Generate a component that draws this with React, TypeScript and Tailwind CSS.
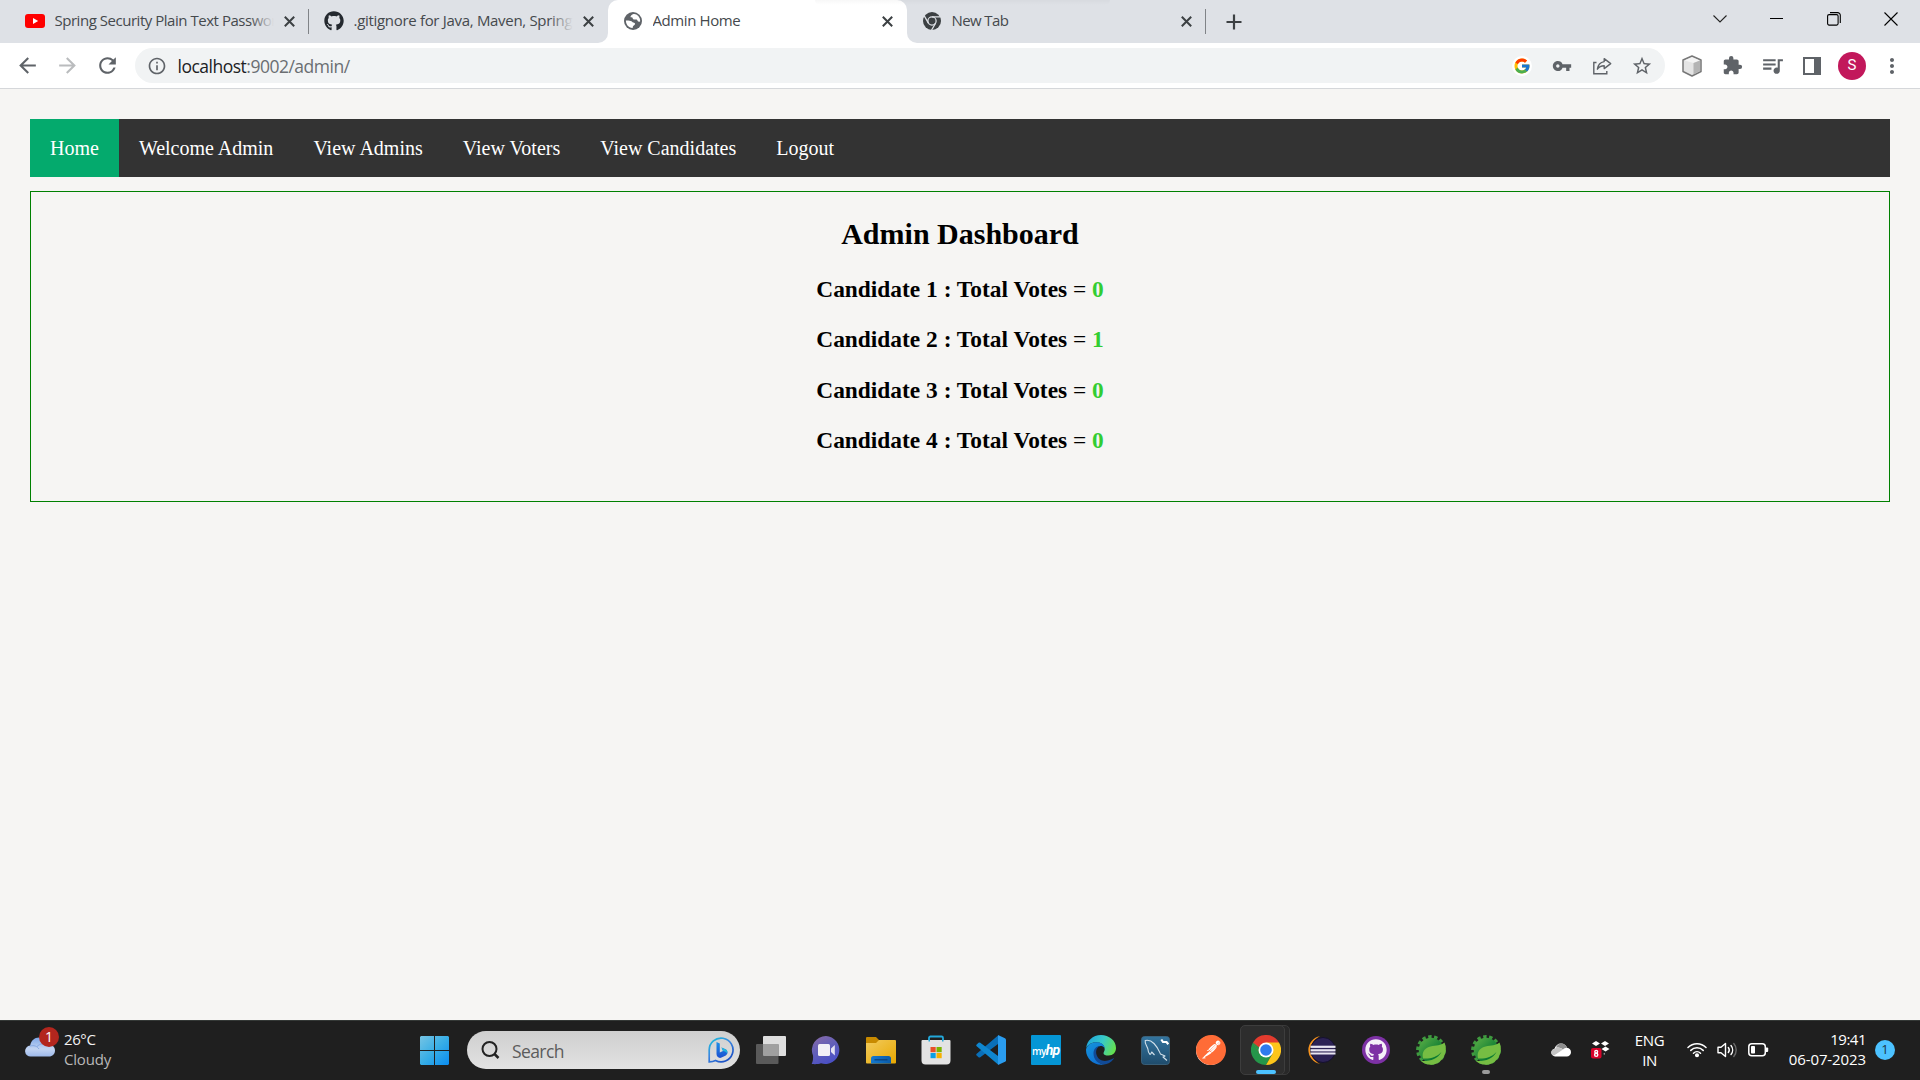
import React from 'react';
import {
  MdArrowBack,
  MdArrowForward,
  MdRefresh,
  MdInfoOutline,
  MdVpnKey,
  MdStarBorder,
  MdExtension,
  MdQueueMusic,
  MdMoreVert,
} from 'react-icons/md';
import { FcGoogle } from 'react-icons/fc';
import { FaGithub } from 'react-icons/fa';
import { SiPostman } from 'react-icons/si';

type Children = { children: React.ReactNode };

/* ---------- browser icons ---------- */

const CloseGlyph = () => (
  <svg width="11" height="11" viewBox="0 0 11 11" stroke="#3c4043" strokeWidth="2" fill="none">
    <path d="M0.8 0.8L10.2 10.2M10.2 0.8L0.8 10.2" />
  </svg>
);

const YoutubeIcon = () => (
  <svg width="20" height="20" viewBox="0 0 20 20">
    <rect x="0" y="3" width="20" height="14" rx="3" fill="#f00" />
    <path d="M8 7l5.2 3L8 13z" fill="#fff" />
  </svg>
);

const GlobeIcon = () => (
  <svg width="18" height="18" viewBox="0 0 18 18">
    <circle cx="9" cy="9" r="9" fill="#5f6368" />
    <path d="M9.500 2C11 1.600 13 2.600 14.300 4c1.200 1.500 1.900 3 1.900 5.200-.6.500-1.300.7-2 .4-.8-.4-.7-1.500-1.500-2-1-.5-2.300.2-3.300-.3-.9-.5-.5-1.600-1.200-1.900-.7-.2-1.400.3-1.700-.3C6.300 4 8 2.300 9.500 2z" fill="#fff" />
    <path d="M1.900 8.500c1.600 0 3.200 0 4.800.4 1.300.3 1.500 1.300 2.600 1.500 1 .2 1.800.5 1.700 1.500-.1 1.200-1.600 1.300-2 2.300-.3.700 0 1.400-.6 1.900C4.600 15.700 1.800 12.500 1.900 8.500z" fill="#fff" />
  </svg>
);

const ChromeMono = () => (
  <svg width="18" height="18" viewBox="0 0 24 24">
    <circle cx="12" cy="12" r="12" fill="#3c4043" />
    <g stroke="#dee1e6" strokeWidth="1.700" fill="none">
      <circle cx="12" cy="12" r="5.500" />
      <path d="M12 6.500H23M7.200 14.800L1.700 5.200M16.800 14.800L11.300 24.300" />
    </g>
  </svg>
);

const ShareIcon = () => (
  <svg width="20" height="20" viewBox="0 0 20 20" fill="none" stroke="#5f6368" strokeWidth="1.400">
    <path d="M4.500 6.500H1.800v11.200h13V15" />
    <path d="M12.200 2.600l6.500 5-6.500 5V9.800c-3 0-5.200 1-6.800 3.400.5-4 2.800-7 6.800-7.600z" strokeLinejoin="round" />
  </svg>
);

const CubeIcon = () => (
  <svg width="22" height="22" viewBox="0 0 22 22">
    <path d="M11 1l9 4v11.500l-9 4.500-9-4.500V5z" fill="#e4e4e4" stroke="#777" strokeWidth="1.500" strokeLinejoin="round" />
    <path d="M11 2.200l7.500 3.300L12.500 8 3.500 5.500z" fill="#f4f4f4" />
    <path d="M12.500 8l6.500-2.500V16l-6.500 3.500z" fill="#b4b4b4" />
  </svg>
);

const SidePanelIcon = () => (
  <svg width="18" height="18" viewBox="0 0 18 18">
    <rect x="1" y="1" width="16" height="16" fill="#fff" stroke="#5f6368" strokeWidth="2" />
    <rect x="11" y="1" width="6" height="16" fill="#5f6368" />
  </svg>
);

/* ---------- browser chrome ---------- */

type TabProps = { icon: React.ReactNode; title: string; tracking?: string; active?: boolean; divider?: boolean };

function Tab({ icon, title, tracking = 'tracking-[-0.4px]', active, divider }: TabProps) {
  return (
    <div className={`relative flex h-[43px] w-[299px] shrink-0 items-center pb-[1px] pl-[15px] ${active ? 'rounded-t-[10px] bg-white' : ''}`}>
      {active && (
        <>
          <span className="absolute bottom-0 left-[-10px] size-[10px] bg-white">
            <span className="block size-full rounded-br-[10px] bg-[#dee1e6]" />
          </span>
          <span className="absolute right-[-10px] bottom-0 size-[10px] bg-white">
            <span className="block size-full rounded-bl-[10px] bg-[#dee1e6]" />
          </span>
        </>
      )}
      <span className="flex w-5 shrink-0 items-center justify-center">{icon}</span>
      <span className={`relative -mt-[2px] ml-[9.500px] w-[219px] overflow-hidden text-[15px] leading-5 whitespace-nowrap text-[#45494d] ${tracking}`}>
        {title}
        {title.length > 20 && (
          <span className="absolute top-0 right-0 h-full w-6 bg-linear-to-r from-transparent to-[#dee1e6]" />
        )}
      </span>
      <span className="ml-[6px] flex w-5 shrink-0 justify-center">
        <CloseGlyph />
      </span>
      {divider && <span className="ml-auto h-[25px] w-px bg-[#808387]" />}
    </div>
  );
}

const WinControl = ({ children }: Children) => <span className="flex w-[57px] items-center justify-center">{children}</span>;

function TabStrip() {
  return (
    <div className="relative flex h-[43px] bg-[#dee1e6] pl-[10px]">
      <Tab icon={<YoutubeIcon />} title="Spring Security Plain Text Password" tracking="tracking-[-0.47px]" divider />
      <Tab icon={<FaGithub size={20} color="#24292f" />} title=".gitignore for Java, Maven, Spring B" tracking="tracking-[-0.31px]" />
      <Tab icon={<GlobeIcon />} title="Admin Home" active />
      <Tab icon={<ChromeMono />} title="New Tab" tracking="tracking-[-0.6px]" divider />
      <span className="flex w-[56px] items-center justify-center">
        <svg width="16" height="16" viewBox="0 0 16 16" stroke="#3c4043" strokeWidth="2.200">
          <path d="M8 0.500V15.500M0.500 8H15.500" />
        </svg>
      </span>
      <div className="mr-[1px] ml-auto flex h-[37px]">
        <WinControl>
          <svg width="14" height="8" viewBox="0 0 14 8" fill="none" stroke="#222" strokeWidth="1.100">
            <path d="M0.500 0.500L7 7L13.500 0.500" />
          </svg>
        </WinControl>
        <WinControl>
          <span className="h-px w-[13px] bg-black" />
        </WinControl>
        <WinControl>
          <svg width="14" height="14" viewBox="0 0 14 14" fill="none" stroke="#000" strokeWidth="1.100">
            <rect x="0.600" y="2.600" width="10.500" height="10.500" rx="1.500" />
            <path d="M3 0.600H10.500A2.700 2.700 0 0 1 13.300 3.300V11" />
          </svg>
        </WinControl>
        <WinControl>
          <svg width="14" height="14" viewBox="0 0 14 14" fill="none" stroke="#000" strokeWidth="1.100">
            <path d="M0.500 0.500L13.500 13.500M13.500 0.500L0.500 13.500" />
          </svg>
        </WinControl>
      </div>
      <span className="absolute top-0 left-[815px] h-[5px] w-[295px] rounded-b-full bg-linear-to-b from-black/3 to-transparent" />
    </div>
  );
}

const Cell = ({ children }: Children) => <span className="flex w-10 shrink-0 items-center justify-center">{children}</span>;

function Toolbar() {
  return (
    <div className="flex h-[46px] items-center border-b border-[#d5d7da] bg-white pl-[7px] text-[#5f6368]">
      <Cell>
        <MdArrowBack size={25} />
      </Cell>
      <Cell>
        <MdArrowForward size={25} color="#babcbe" />
      </Cell>
      <Cell>
        <MdRefresh size={25} />
      </Cell>
      <div className="ml-[8px] flex h-[35px] w-[1530px] shrink-0 items-center rounded-full bg-[#f1f3f4] pr-[3px] pl-[2px]">
        <Cell>
          <MdInfoOutline size={20} />
        </Cell>
        <span className="ml-[0.500px] text-[17.500px] leading-6 tracking-[-0.5px] text-[#6a6e72]">
          <span className="text-[#202124]">localhost</span>:9002/admin/
        </span>
        <div className="ml-auto flex">
          <Cell>
            <span className="flex size-5 items-center justify-center rounded-full bg-white">
              <FcGoogle size={18} />
            </span>
          </Cell>
          <Cell>
            <MdVpnKey size={20} />
          </Cell>
          <Cell>
            <ShareIcon />
          </Cell>
          <Cell>
            <MdStarBorder size={22} />
          </Cell>
        </div>
      </div>
      <div className="ml-[7px] flex">
        <Cell>
          <CubeIcon />
        </Cell>
        <Cell>
          <MdExtension size={21} />
        </Cell>
        <Cell>
          <MdQueueMusic size={25} className="shrink-0" />
        </Cell>
        <Cell>
          <SidePanelIcon />
        </Cell>
        <Cell>
          <span className="flex size-7 items-center justify-center rounded-full bg-[#c2185b] font-['Roboto',sans-serif] text-[15px] text-white">S</span>
        </Cell>
        <Cell>
          <MdMoreVert size={24} />
        </Cell>
      </div>
    </div>
  );
}

/* ---------- page ---------- */

const links = ['Home', 'Welcome Admin', 'View Admins', 'View Voters', 'View Candidates', 'Logout'];
const votes = [0, 1, 0, 0];

function Page() {
  return (
    <main className="flex-1 bg-[#f6f5f3] px-[30px] pt-[30px] font-['Liberation_Serif',serif] text-[20px]">
      <nav className="flex h-[58px] bg-[#333] text-white">
        {links.map((l, i) => (
          <a key={l} className={`flex items-center px-5 ${i === 0 ? 'bg-[#04aa6d]' : ''}`}>
            {l}
          </a>
        ))}
      </nav>
      <section className="mt-[14px] h-[311px] border border-[#008000] pt-[25px] text-center font-bold text-black">
        <h2 className="text-[30px] leading-[34px]">Admin Dashboard</h2>
        <div className="mt-[25px] flex flex-col gap-[23.400px]">
          {votes.map((v, i) => (
            <h3 key={i} className="text-[23.400px] leading-[27px]">
              Candidate {i + 1} : Total Votes <span className="font-normal">=</span> <span className="text-[#32cd32]">{v}</span>
            </h3>
          ))}
        </div>
      </section>
    </main>
  );
}

/* ---------- taskbar icons ---------- */

const WeatherIcon = () => (
  <svg width="30" height="20" viewBox="0 0 30 20">
    <defs>
      <linearGradient id="wc" x1="0" y1="0" x2="0" y2="1">
        <stop offset="0" stopColor="#7fa8e8" />
        <stop offset="0.600" stopColor="#c3d4f2" />
        <stop offset="1" stopColor="#9db9ea" />
      </linearGradient>
    </defs>
    <path d="M6 19.500a5.500 5.500 0 0 1-.8-11C6 3.500 9.500.5 14 .5c4.500 0 7.500 2.500 8.500 6.500 4 0 7.500 2.500 7.500 6.500 0 3.500-2.500 6-6 6z" fill="url(#wc)" />
    <path d="M5 9c4-1 7 0 9 3M12 9.500c3-3 7-3.500 10.500-2" stroke="#86a9e4" fill="none" />
  </svg>
);

const StartIcon = () => (
  <svg width="29" height="29" viewBox="0 0 29 29">
    <defs>
      <linearGradient id="st" gradientUnits="userSpaceOnUse" x1="0" y1="0" x2="29" y2="29">
        <stop offset="0" stopColor="#76c4e4" />
        <stop offset="0.500" stopColor="#38aee6" />
        <stop offset="1" stopColor="#0a8cf0" />
      </linearGradient>
    </defs>
    <path d="M1 0h13v14H0V1zM15 0h13l1 1v13H15zM0 15h14v14H1l-1-1zM15 15h14v13l-1 1H15z" fill="url(#st)" />
  </svg>
);

const BingIcon = () => (
  <svg width="26" height="26" viewBox="0 0 26 26">
    <defs>
      <linearGradient id="bo" x1="0" y1="0" x2="0.700" y2="1">
        <stop offset="0" stopColor="#17c3dc" />
        <stop offset="0.500" stopColor="#3a86e0" />
        <stop offset="1" stopColor="#1a4fc4" />
      </linearGradient>
      <linearGradient id="bb" x1="0" y1="0" x2="0" y2="1">
        <stop offset="0" stopColor="#1e90e8" />
        <stop offset="1" stopColor="#1c50d0" />
      </linearGradient>
    </defs>
    <path d="M1.200 24.800V13a11.900 11.900 0 1 1 6.300 10.500c-2 1-4 1.300-6.300 1.300z" fill="none" stroke="url(#bo)" strokeWidth="1.700" />
    <path d="M8.500 5l3.300 1.500v9L15 14l-1.500-3.500 4 1.700c2.600 1.300 2.600 4.800.3 6.200l-4.300 2.200c-2.400 1-5-.6-5-3.600z" fill="url(#bb)" />
    <path d="M13.500 10.500l4 1.700c1.700.9 2.200 2.700 1.600 4.200-.8-1.500-2.300-2-4.100-2.400z" fill="#23b4dc" />
  </svg>
);

const TaskViewIcon = () => (
  <svg width="30" height="30" viewBox="0 0 30 30">
    <rect x="7" y="1" width="23" height="20" rx="1" fill="#dedede" />
    <rect x="0" y="9" width="22.500" height="20" rx="1" fill="#5a5a5a" />
    <path d="M7 9h15.500v12H8a1 1 0 0 1-1-1z" fill="#a0a0a0" />
  </svg>
);

const ChatIcon = () => (
  <svg width="30" height="30" viewBox="0 0 30 30">
    <defs>
      <linearGradient id="ch" x1="0" y1="0" x2="0.500" y2="1">
        <stop offset="0" stopColor="#8b6aa5" />
        <stop offset="0.500" stopColor="#6460b8" />
        <stop offset="1" stopColor="#4b50c4" />
      </linearGradient>
    </defs>
    <path d="M15 1a14 14 0 1 1-5 27.300c-2.500.9-6 1-9.300.700C2 26 2.200 24 2 20.500A14 14 0 0 1 15 1z" fill="url(#ch)" />
    <rect x="7" y="9" width="12" height="12" rx="1.500" fill="#f2f0f6" />
    <path d="M20 13.500l3.800-3.500v10.500L20 17z" fill="#e4e2f2" />
  </svg>
);

const ExplorerIcon = () => (
  <svg width="30" height="30" viewBox="0 0 30 30">
    <defs>
      <linearGradient id="ex" x1="0" y1="0" x2="1" y2="1">
        <stop offset="0" stopColor="#f2cb5e" />
        <stop offset="1" stopColor="#e8a800" />
      </linearGradient>
      <linearGradient id="eb" x1="0" y1="0" x2="1" y2="0">
        <stop offset="0" stopColor="#1479d0" />
        <stop offset="1" stopColor="#0a5ba8" />
      </linearGradient>
    </defs>
    <path d="M0 3a1 1 0 0 1 1-1h9l3 3v5H0z" fill="#c88a00" />
    <path d="M0 8h10l3-3h16a1 1 0 0 1 1 1v21.500a1 1 0 0 1-1 1H1a1 1 0 0 1-1-1z" fill="url(#ex)" />
    <path d="M5 28.500V23.500a2.500 2.500 0 0 1 2.500-2.500h15a2.500 2.500 0 0 1 2.500 2.500v5z" fill="url(#eb)" />
    <path d="M8.500 24.800h13" stroke="#0b3f78" strokeWidth="1.200" />
  </svg>
);

const StoreIcon = () => (
  <svg width="30" height="30" viewBox="0 0 30 30">
    <path d="M8 6V3a1.500 1.500 0 0 1 1.500-1.500h11A1.500 1.500 0 0 1 22 3v3" fill="none" stroke="#22a8da" strokeWidth="1.800" />
    <path d="M.5 6a1 1 0 0 1 1-1h27a1 1 0 0 1 1 1v19.500a4 4 0 0 1-4 4h-21a4 4 0 0 1-4-4z" fill="#e3e3e3" />
    <path d="M7.500 5h1.500v1.500H7.500zM21 5h1.500v1.500H21z" fill="#22a8da" />
    <path d="M9.500 12h5.200v5.200H9.500z" fill="#e8502a" />
    <path d="M15.500 12h5.200v5.200h-5.200z" fill="#7cb400" />
    <path d="M9.500 18h5.200v5.200H9.500z" fill="#0a9fe6" />
    <path d="M15.500 18h5.200v5.200h-5.200z" fill="#f6b000" />
  </svg>
);

const VsCodeIcon = () => (
  <svg width="30" height="30" viewBox="0 0 30 30">
    <path d="M22 0.500v8.500L4.300 22.200a1.500 1.500 0 0 1-1.800 0L.7 20.600a1.200 1.200 0 0 1 0-1.800z" fill="#0a6fb8" />
    <path d="M22 29.500V21L4.300 7.800a1.500 1.500 0 0 0-1.800 0L.7 9.400a1.200 1.200 0 0 0 0 1.800z" fill="#0f86cf" />
    <path d="M22 0l7 3.200a1.800 1.800 0 0 1 1 1.600v20.400a1.800 1.800 0 0 1-1 1.600L22 30z" fill="#2a9df0" />
  </svg>
);

const MyHpIcon = () => (
  <span className="flex size-[30px] items-center justify-center rounded-[1px] bg-[#0596d5] text-white">
    <span className="mt-[1px] text-[10px] leading-3 font-semibold tracking-[-0.5px]">my</span>
    <span className="-mt-[1px] font-['Roboto',sans-serif] text-[14px] leading-4 font-bold tracking-[-1px] italic">hp</span>
  </span>
);

const EdgeIcon = () => (
  <svg width="30" height="30" viewBox="0 0 30 30">
    <defs>
      <linearGradient id="e1" x1="0" y1="0.300" x2="1" y2="0.600">
        <stop offset="0" stopColor="#1fa7dd" />
        <stop offset="0.500" stopColor="#38c9c8" />
        <stop offset="1" stopColor="#66e04c" />
      </linearGradient>
      <linearGradient id="e2" x1="0" y1="0" x2="0.600" y2="1">
        <stop offset="0" stopColor="#1595dc" />
        <stop offset="1" stopColor="#0f6fd2" />
      </linearGradient>
    </defs>
    <path d="M15 0C6.500 0 .8 6 .2 13 2.500 9 6.500 7.300 10.500 7.300c5 0 8.200 3 8.200 7 0 2-1.200 2.800-1.200 4 0 1.400 2 2.300 5 2.300 4.500 0 7.500-3 7.500-7.500C30 5.500 23 0 15 0z" fill="url(#e1)" />
    <path d="M.1 14C1.500 10 5.500 7.300 10.500 7.300c4.800 0 8.200 2.700 8.200 6.300-1-2-2.500-2.600-4.200-2.600-3.500 0-5.500 3.500-5.500 7.500 0 6 4 10.500 9.500 11C8 31.500-.8 23.500.1 14z" fill="url(#e2)" />
    <path d="M14 11.100c-3.500 1.500-4.500 5-3.500 8.500C12 25 17 27 22 25.500c2-.5 4-1.500 5.300-2.300.4-.2.8.2.5.6-2.800 4-6.300 5.700-9.800 5.700C11.500 29 7.500 24 7.500 18.500c0-4 2.500-7.200 6.500-7.400z" fill="#114a96" />
  </svg>
);

const WorkbenchIcon = () => (
  <svg width="29" height="29" viewBox="0 0 29 29">
    <defs>
      <linearGradient id="mw" x1="0" y1="0" x2="0" y2="1">
        <stop offset="0" stopColor="#33749f" />
        <stop offset="1" stopColor="#1f4c6c" />
      </linearGradient>
    </defs>
    <rect x="0.500" y="0.500" width="28" height="28" rx="3" fill="url(#mw)" stroke="#3f6883" strokeWidth="0.800" />
    <path d="M9 18.500c-1.500-1.500-2-3-2-5C6.500 10.500 3.500 8 4.200 4.500c3-.8 6.300.5 8.800 3 3.500 3.500 4.800 7 6.500 10.500l4.500 2-2 1 4 3.500M9 18.500c1-.5 1.200-1.500 1.700-2.500l2.800 3" fill="none" stroke="#d2e0ea" strokeWidth="1.100" strokeLinejoin="round" />
    <path d="M20.300 3.500l1.700 2.500h3.500l1.800 2.200" stroke="#fff" strokeWidth="2.200" fill="none" />
  </svg>
);

const PostmanIcon = () => (
  <span className="flex size-[30px] items-center justify-center">
    <span className="flex size-[29px] items-center justify-center rounded-full bg-white">
      <SiPostman size={30} color="#ff6c37" className="shrink-0" />
    </span>
  </span>
);

const ChromeIcon = () => (
  <svg width="30" height="30" viewBox="0 0 30 30">
    <path d="M15 15L2 7.500A15 15 0 0 1 28 7.500z" fill="#e33b2e" />
    <path d="M2 7.500A15 15 0 0 0 15 30L21.500 18.700 15 15z" fill="#25964a" />
    <path d="M15 7.500H28A15 15 0 0 1 15 30L21.500 18.700z" fill="#fdc51a" />
    <path d="M2 7.500L8.500 18.700 15 7.500z" fill="#e33b2e" />
    <path d="M2 7.500L8.500 18.700 10 14z" fill="#25964a" />
    <circle cx="15" cy="15" r="7.500" fill="#fff" />
    <circle cx="15" cy="15" r="5.800" fill="#2f7bee" />
  </svg>
);

const EclipseIcon = () => (
  <svg width="30" height="30" viewBox="0 0 30 30">
    <path d="M14 1.200A14 14 0 0 0 14 28.800C8 26 5 21 5 15S8 4 14 1.200z" fill="#f7941e" />
    <circle cx="17" cy="15" r="12.500" fill="#2c2255" stroke="#15102e" />
    <g fill="#e9e6f2">
      <rect x="4.500" y="10.700" width="25" height="2.200" />
      <rect x="4.500" y="14.200" width="25" height="2.200" />
      <rect x="4.500" y="17.500" width="25" height="2" />
    </g>
  </svg>
);

const GithubDesktopIcon = () => (
  <span className="flex size-7 items-center justify-center rounded-full bg-[#7d31a5]">
    <FaGithub size={22} color="#f4eff8" />
  </span>
);

const SpringIcon = () => (
  <svg width="30" height="30" viewBox="0 0 30 30">
    <defs>
      <linearGradient id="sg" x1="0" y1="0" x2="0.700" y2="0.700">
        <stop offset="0" stopColor="#5fb146" />
        <stop offset="1" stopColor="#0b7a33" />
      </linearGradient>
    </defs>
    <circle cx="15" cy="15" r="13.200" fill="none" stroke="#3f9a3f" strokeWidth="3.400" strokeDasharray="3.400 2.500" />
    <circle cx="15" cy="15" r="12.300" fill="url(#sg)" />
    <path d="M28.500 7.500c2.500 6 1.500 12-2.500 17-5.500 6.500-15 7-21 1.500 9 .5 16.500-2 20.500-9-4.500 5-11 7-18.500 6.500-1.500-6 1.500-10.500 7.500-12 5.500-1.300 10.500-1 14-4z" fill="#76bd43" />
  </svg>
);

const CloudTray = () => (
  <svg width="20" height="14" viewBox="0 0 20 14">
    <path d="M4 13.500a4 4 0 0 1-.5-7.800C4.500 2.500 7 .5 10 .5c3 0 5.200 1.700 6 4.300 2.500.3 4 2.200 4 4.400 0 2.500-2 4.300-4.200 4.300z" fill="#fff" />
    <path d="M5 4.500C6.200 2 8 .5 10 .5c3 0 5.200 1.700 6 4.300-2 0-3 .7-4 1.700-2-1.700-4.500-2.200-7-2z" fill="#8e8e8e" />
    <path d="M3.500 5.700c3-1.500 6-1 8.500.8L3 12.500C.5 12 0 10.500 0 9.500 0 8 1.500 6 3.500 5.700z" fill="#c4c4c4" />
  </svg>
);

const DropboxTray = () => (
  <svg width="19" height="18" viewBox="0 0 19 18">
    <g fill="#fff">
      <path d="M5 0l4 2.500L5 5 1 2.500zM14 0l4 2.500L14 5l-4-2.500zM14.500 5.500l4 2.500-4 2.500-4-2.500z" />
      <path d="M12 13l2-1.300v2z" opacity="0.600" />
    </g>
    <rect x="0" y="7" width="10.500" height="10.500" rx="2" fill="#d9042b" />
    <g fill="none" stroke="#fff" strokeWidth="1.400">
      <circle cx="5.200" cy="10.800" r="1.400" />
      <circle cx="5.200" cy="13.800" r="1.600" />
    </g>
  </svg>
);

const WifiTray = () => (
  <svg width="20" height="16" viewBox="0 0 20 16" fill="none" stroke="#fff" strokeWidth="1.500" strokeLinecap="round">
    <path d="M1 5.500a12.700 12.700 0 0 1 18 0M3.800 8.400a8.700 8.700 0 0 1 12.400 0M6.500 11.200a5 5 0 0 1 7 0" />
    <circle cx="10" cy="13.300" r="1.300" fill="#fff" />
  </svg>
);

const VolumeTray = () => (
  <svg width="21" height="18" viewBox="0 0 21 18" fill="none" stroke="#fff" strokeWidth="1.400" strokeLinecap="round" strokeLinejoin="round">
    <path d="M1 6.300h3L8.500 2.500v13L4 11.700H1z" />
    <path d="M11.300 6.500a4 4 0 0 1 0 5M14 4.500a7 7 0 0 1 0 9" />
    <path d="M16.800 2.500a10 10 0 0 1 0 13" stroke="#6a6a6a" />
  </svg>
);

const BatteryTray = () => (
  <svg width="21" height="14" viewBox="0 0 21 14">
    <rect x="0.800" y="0.800" width="16.500" height="12" rx="3" fill="none" stroke="#fff" strokeWidth="1.500" />
    <rect x="3" y="3" width="4" height="7.600" rx="0.800" fill="#fff" />
    <path d="M18 4.500h1.200a1 1 0 0 1 1 1v2.600a1 1 0 0 1-1 1H18z" fill="#fff" />
  </svg>
);

/* ---------- taskbar ---------- */

const App55 = ({ children }: Children) => <span className="relative flex w-[55px] shrink-0 items-center justify-center">{children}</span>;

function Taskbar() {
  return (
    <footer className="flex h-[60px] items-stretch border-t border-[#343836] bg-[#1f1f1f] pb-[1px] text-[15px] text-white">
      <div className="flex w-[407px] shrink-0 pl-[25px]">
        <span className="relative mt-[16px] h-5 w-[30px]">
          <WeatherIcon />
          <span className="absolute top-[-10px] left-[14px] flex size-5 items-center justify-center rounded-full bg-[#b3261e] pb-[1px] text-[14px]">1</span>
        </span>
        <span className="mt-[8px] ml-[9px] leading-5 tracking-[-0.2px]">
          <span className="block tracking-[-0.4px] text-[#f2f2f2]">26°C</span>
          <span className="block text-[#b8b8b8]">Cloudy</span>
        </span>
      </div>
      <App55>
        <StartIcon />
      </App55>
      <div className="mt-[10px] ml-[5px] flex h-[38px] w-[273px] shrink-0 items-center rounded-full bg-linear-to-b from-[#cfcfcf] to-[#e2e2e2] pr-[6px] pl-[14px]">
        <svg width="19" height="20" viewBox="0 0 19 20" fill="none" stroke="#222" strokeWidth="2">
          <circle cx="8.500" cy="9" r="7" />
          <path d="M13.500 14L17.500 18" strokeWidth="2.500" />
        </svg>
        <span className="mt-[1px] ml-[12px] text-[17.500px] leading-6 tracking-[-0.6px] text-[#5c5c5c]">Search</span>
        <span className="ml-auto">
          <BingIcon />
        </span>
      </div>
      <div className="ml-[3px] flex">
        <App55>
          <TaskViewIcon />
        </App55>
        <App55>
          <ChatIcon />
        </App55>
        <App55>
          <ExplorerIcon />
        </App55>
        <App55>
          <StoreIcon />
        </App55>
        <App55>
          <VsCodeIcon />
        </App55>
        <App55>
          <MyHpIcon />
        </App55>
        <App55>
          <EdgeIcon />
        </App55>
        <App55>
          <WorkbenchIcon />
        </App55>
        <App55>
          <PostmanIcon />
        </App55>
        <App55>
          <span className="absolute top-[4px] left-[10px] h-[50px] w-[42px] rounded-[5px] border border-[#3a3a3a] bg-[#282828]" />
          <span className="absolute top-[4px] left-[2px] h-[50px] w-[45px] rounded-[5px] border border-[#3d3d3d] bg-[#2d2d2d]" />
          <span className="relative">
            <ChromeIcon />
          </span>
          <span className="absolute bottom-[5px] left-[17.500px] h-1 w-5 rounded-full bg-[#4cc2ff]" />
        </App55>
        <App55>
          <EclipseIcon />
        </App55>
        <App55>
          <GithubDesktopIcon />
        </App55>
        <App55>
          <SpringIcon />
        </App55>
        <App55>
          <SpringIcon />
          <span className="absolute bottom-[5px] left-[23.500px] h-1 w-2 rounded-full bg-[#9a9a9a]" />
        </App55>
      </div>
      <div className="ml-auto flex items-center pr-[25px]">
        <CloudTray />
        <span className="ml-5">
          <DropboxTray />
        </span>
        <span className="ml-[24px] w-[31px] text-center leading-5 tracking-[-0.4px]">
          ENG
          <br />
          IN
        </span>
        <span className="ml-[22px] flex items-center gap-[10px]">
          <WifiTray />
          <VolumeTray />
          <BatteryTray />
        </span>
        <span className="-mt-[3px] ml-[18px] w-[79px] text-right leading-5 tracking-[-0.100px] whitespace-nowrap">
          <span className="tracking-[-0.5px]">19:41</span>
          <br />
          06-07-2023
        </span>
        <span className="ml-[9px] flex size-5 items-center justify-center rounded-full bg-[#4cc2ff] pb-[1px] text-[13px] text-[#1c3646]">1</span>
      </div>
    </footer>
  );
}

export default function App() {
  return (
    <div className="flex h-[1080px] w-[1920px] flex-col overflow-hidden font-['Open_Sans','Noto_Sans',sans-serif]">
      <TabStrip />
      <Toolbar />
      <Page />
      <Taskbar />
    </div>
  );
}
